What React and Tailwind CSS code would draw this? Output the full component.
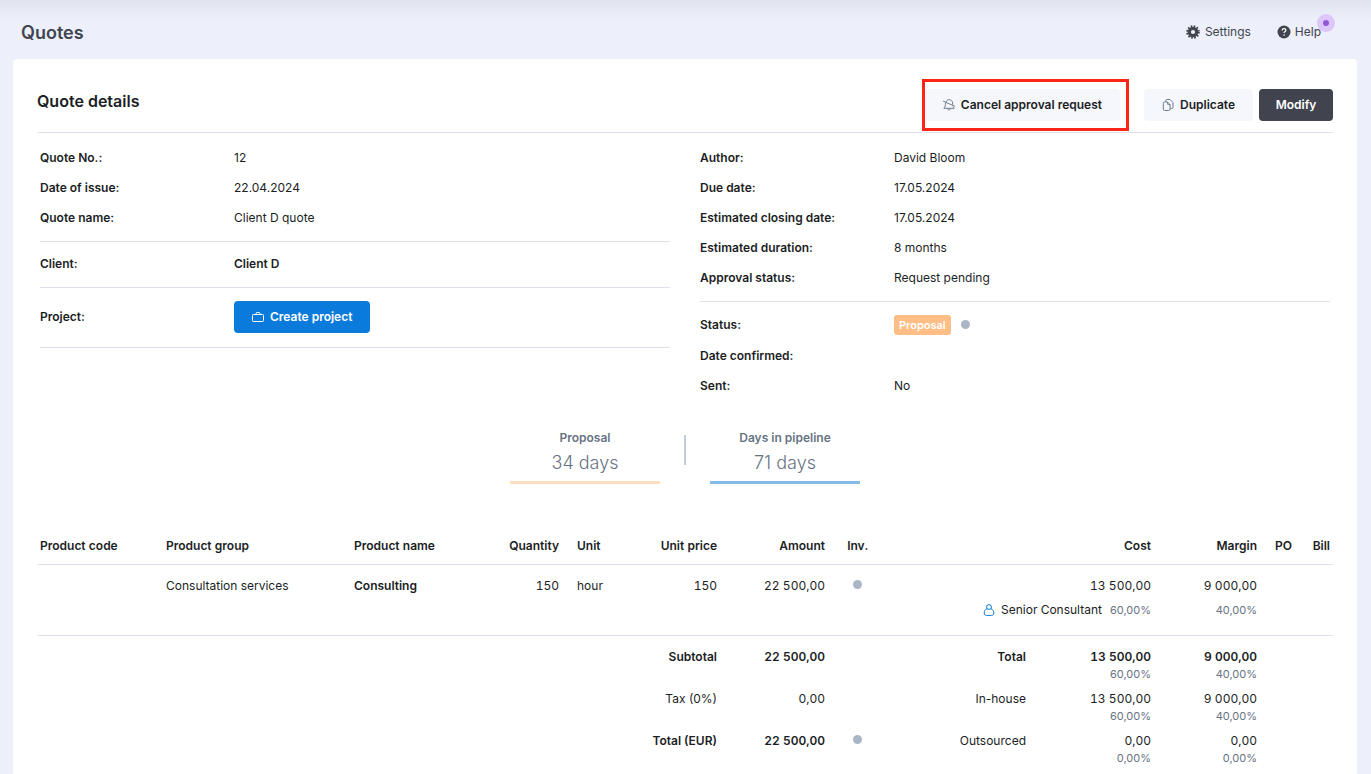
import clsx from 'clsx';

const details = [
    { label: 'Quote No.:', value: '12' },
    { label: 'Date of issue:', value: '22.04.2024' },
    { label: 'Quote name:', value: 'Client D quote' },
];

const dates = [
    { label: 'Author:', value: 'David Bloom' },
    { label: 'Due date:', value: '17.05.2024' },
    { label: 'Estimated closing date:', value: '17.05.2024' },
    { label: 'Estimated duration:', value: '8 months' },
    { label: 'Approval status:', value: 'Request pending' },
];

const totals = [
    { label: 'Subtotal', amount: '22 500,00', bold: true, side: 'Total', sideBold: true, cost: '13 500,00', costPct: '60,00%', margin: '9 000,00', marginPct: '40,00%' },
    { label: 'Tax (0%)', amount: '0,00', side: 'In-house', cost: '13 500,00', costPct: '60,00%', margin: '9 000,00', marginPct: '40,00%' },
    { label: 'Total (EUR)', amount: '22 500,00', bold: true, dot: true, side: 'Outsourced', cost: '0,00', costPct: '0,00%', margin: '0,00', marginPct: '0,00%' },
];

function GearIcon() {
    return (
        <svg className="size-[14px]" viewBox="0 0 14 14" aria-hidden="true">
            <circle cx="7" cy="7" r="3.7" fill="none" stroke="currentColor" strokeWidth="3.2" />
            <circle cx="7" cy="7" r="5.8" fill="none" stroke="currentColor" strokeWidth="2" strokeDasharray="1.6 1.437" />
        </svg>
    );
}

function HelpIcon() {
    return (
        <svg className="size-[14px]" viewBox="0 0 14 14" aria-hidden="true">
            <circle cx="7" cy="7" r="6.5" fill="currentColor" />
            <path d="M5.1 5.5c.1-1.2.8-1.800 1.900-1.800s1.900.7 1.900 1.600c0 1.300-1.800 1.300-1.800 2.800" fill="none" stroke="#fff" strokeWidth="1.2" />
            <circle cx="7.100" cy="10" r=".8" fill="#fff" />
        </svg>
    );
}

function BellOffIcon() {
    return (
        <svg className="size-3 text-[#6f7b8d]" viewBox="0 0 12 12" fill="none" stroke="currentColor" strokeLinecap="round" strokeLinejoin="round" aria-hidden="true">
            <path d="M.4 2.200l11.200 5" />
            <path d="M3.100 2.500C3.700 1.300 4.800.7 6.100.7c2.100 0 3.400 1.400 3.500 3.200l.1 1.500" />
            <path d="M2.500 4.300C2.500 6.600 2.100 8.100.8 9.300h10.400L10.300 8" />
            <path d="M5 10.600c.3.800 1.800.8 2.100 0" />
        </svg>
    );
}

function CopyIcon() {
    return (
        <svg className="size-3 text-[#6f7b8d]" viewBox="0 0 12 12" fill="none" stroke="currentColor" strokeLinejoin="round" aria-hidden="true">
            <path d="M3.500 2.900H2.500C1.700 2.900 1.300 3.400 1.300 4.200v5.900c0 .9.500 1.400 1.400 1.400h4c.9 0 1.400-.6 1.400-1.400" />
            <path d="M3.700 2.900V1.900C3.700 1 4.200.5 5.100.5H8l3 3v4.700c0 .9-.5 1.400-1.400 1.400H8.200" />
            <path d="M3.700 2.900h1.700l2.700 2.700v4.500" />
            <path d="M5.500 3v1.800c0 .5.3.8.8.8h1.800" />
        </svg>
    );
}

function BriefcaseIcon() {
    return (
        <svg className="size-3" viewBox="0 0 12 12" fill="none" stroke="currentColor" aria-hidden="true">
            <rect x=".5" y="3.500" width="11" height="7" rx=".8" />
            <path d="M4 3.500v-.8c0-.7.4-1.200 1.100-1.200h1.800c.7 0 1.100.5 1.100 1.200v.8" />
        </svg>
    );
}

function PersonIcon() {
    return (
        <svg className="size-3 text-[#0a7bdb]" viewBox="0 0 12 12" fill="none" stroke="currentColor" strokeLinejoin="round" aria-hidden="true">
            <circle cx="6" cy="3" r="2.400" />
            <path d="M4.200 4.600C2.300 5.300 1.200 7 1.200 9c0 1.600.9 2.400 2.300 2.400h5c1.400 0 2.300-.8 2.300-2.400 0-2-1.100-3.700-3-4.400" />
        </svg>
    );
}

function Dot() {
    return <span className="mb-px inline-block size-[9px] rounded-full bg-[#abb5c6]" />;
}

function Field({ label, children, tall }) {
    return (
        <div className={clsx('flex items-center', tall ? 'h-8' : 'h-[30px]')}>
            <dt className="w-[194px] shrink-0 font-semibold">{label}</dt>
            <dd className="flex items-center">{children}</dd>
        </div>
    );
}

function Stat({ label, value, line }) {
    return (
        <div className={clsx('w-[150px] border-b-[3px] pb-[5px] text-center text-[#687384]', line)}>
            <p className="text-xs font-semibold">{label}</p>
            <p className="pt-1 text-lg font-light leading-[26px]">{value}</p>
        </div>
    );
}

function Percent({ children }) {
    return <div className="text-[11px] font-normal normal-nums leading-[18px] text-[#687384]">{children}</div>;
}

export default function App() {
    return (
        <div className="min-h-screen bg-[#edf0fa] bg-linear-to-b from-[#e0e4ee] to-[#edf0fa] to-[20px] font-['Inter',sans-serif] text-xs text-[#1b1e24]">
            <header className="flex h-[59px] items-center justify-between pl-[21px] pr-[50px] pt-[6px] text-[#41454f]">
                <h1 className="text-lg font-semibold">Quotes</h1>
                <nav className="flex items-center gap-[26px] pb-[2px]">
                    <a href="#settings" className="flex items-center gap-[5px]">
                        <GearIcon />
                        Settings
                    </a>
                    <a href="#help" className="relative flex items-center gap-1">
                        <HelpIcon />
                        Help
                        {/* Unread news indicator */}
                        <span className="absolute -right-[14px] -top-[10px] flex size-[18px] items-center justify-center rounded-full bg-[#dcc6fa]">
                            <span className="size-[6px] rounded-full bg-[#8f59d6]" />
                        </span>
                    </a>
                </nav>
            </header>

            <main className="ml-[13px] mr-[14px] min-h-[calc(100vh-59px)] rounded-t bg-white px-6">
                <div className="flex h-[74px] items-start justify-between border-b border-[#dce1ea] pt-[30px]">
                    <h2 className="text-base font-semibold">Quote details</h2>
                    <div className="flex font-semibold">
                        <div className="relative mr-6">
                            <button type="button" className="flex h-8 items-center gap-[6px] rounded bg-[#f6f7fc] px-[18px]">
                                <BellOffIcon />
                                Cancel approval request
                            </button>
                            {/* Highlight frame */}
                            <span className="pointer-events-none absolute -bottom-[10px] -left-[3px] -right-[9px] -top-[10px] border-[3px] border-[#fb2618]" />
                        </div>
                        <button type="button" className="mr-[6px] flex h-8 items-center gap-[6px] rounded bg-[#f6f7fc] px-[18px]">
                            <CopyIcon />
                            Duplicate
                        </button>
                        <button type="button" className="h-8 min-w-[74px] rounded bg-[#41444e] px-4 text-white">
                            Modify
                        </button>
                    </div>
                </div>

                <div className="grid grid-cols-2 gap-[30px] px-[3px] pt-[10px]">
                    <div>
                        <dl className="border-b border-[#dfe1ea] pb-2">
                            {details.map((item) => (
                                <Field key={item.label} label={item.label}>{item.value}</Field>
                            ))}
                        </dl>
                        <dl className="border-b border-[#dfe1ea] pb-2 pt-[7px]">
                            <Field label="Client:">
                                <a href="#client" className="font-semibold">Client D</a>
                            </Field>
                        </dl>
                        <dl className="border-b border-[#dfe1ea] pb-[14px] pt-[13px]">
                            <Field label="Project:" tall>
                                <button type="button" className="flex h-8 items-center gap-[6px] rounded bg-[#0a7bdb] px-[18px] font-semibold text-white">
                                    <BriefcaseIcon />
                                    Create project
                                </button>
                            </Field>
                        </dl>
                    </div>
                    <div>
                        <dl className="border-b border-[#dfe1ea] pb-2">
                            {dates.map((item) => (
                                <Field key={item.label} label={item.label}>{item.value}</Field>
                            ))}
                        </dl>
                        <dl className="pt-[7px]">
                            <Field label="Status:" tall>
                                <span className="mr-[10px] rounded-[3px] bg-[#ffbe85] px-[5px] text-[11px] font-semibold leading-5 text-white">Proposal</span>
                                <Dot />
                            </Field>
                            <Field label="Date confirmed:" />
                            <Field label="Sent:">No</Field>
                        </dl>
                    </div>
                </div>

                <div className="flex items-start justify-center gap-6 pt-[29px]">
                    <Stat label="Proposal" value="34 days" line="border-[#fddfbe]" />
                    <span className="mt-[5px] h-[30px] w-[2px] bg-[#c3ccdb]" />
                    <Stat label="Days in pipeline" value="71 days" line="border-[#84bbe8]" />
                </div>

                <table className="mt-[43px] w-full min-w-[1200px] table-fixed tabular-nums">
                    <colgroup>
                        <col className="w-[120px]" />
                        <col className="w-[188px]" />
                        <col className="w-[140px]" />
                        <col className="w-[83px]" />
                        <col className="w-[70px]" />
                        <col className="w-[88px]" />
                        <col className="w-[108px]" />
                        <col className="w-[47px]" />
                        <col />
                        <col className="w-[125px]" />
                        <col className="w-[106px]" />
                        <col className="w-[36px]" />
                        <col className="w-[31px]" />
                    </colgroup>
                    <thead>
                        <tr className="h-[37px] whitespace-nowrap border-b border-[#dce1ea] text-left *:pt-[2px] *:font-semibold">
                            <th className="pl-[3px]">Product code</th>
                            <th className="pl-[9px]">Product group</th>
                            <th className="pl-[9px]">Product name</th>
                            <th className="pr-[9px] text-right">Quantity</th>
                            <th className="pl-[9px]">Unit</th>
                            <th className="pr-[9px] text-right">Unit price</th>
                            <th className="pr-[9px] text-right">Amount</th>
                            <th className="text-center">Inv.</th>
                            <th colSpan={2} className="pr-[9px] text-right">Cost</th>
                            <th className="pr-[9px] text-right">Margin</th>
                            <th className="pl-[9px]">PO</th>
                            <th className="pr-[3px] text-right">Bill</th>
                        </tr>
                    </thead>
                    <tbody>
                        <tr className="h-[71px] border-b border-[#dce1ea] align-top *:pt-[13px]">
                            <td />
                            <td className="pl-[9px]">Consultation services</td>
                            <td className="pl-[9px] font-semibold">Consulting</td>
                            <td className="pr-[9px] text-right">150</td>
                            <td className="pl-[9px]">hour</td>
                            <td className="pr-[9px] text-right">150</td>
                            <td className="pr-[9px] text-right">22 500,00</td>
                            <td className="text-center"><Dot /></td>
                            <td colSpan={2} className="pr-[9px] text-right">
                                13 500,00
                                <div className="flex items-center justify-end pt-[7px]">
                                    <PersonIcon />
                                    <span className="ml-[6px] mr-2">Senior Consultant</span>
                                    <Percent>60,00%</Percent>
                                </div>
                            </td>
                            <td className="pr-[9px] text-right">
                                9 000,00
                                <div className="pt-[7px]">
                                    <Percent>40,00%</Percent>
                                </div>
                            </td>
                            <td />
                            <td />
                        </tr>
                    </tbody>
                    <tfoot className="before:block before:h-[13px]">
                        {totals.map((row) => (
                            <tr key={row.label} className="text-right align-top *:pb-[8px]">
                                <td colSpan={6} className={clsx('pr-[9px] normal-nums', row.bold && 'font-semibold')}>{row.label}</td>
                                <td className={clsx('pr-[9px]', row.bold && 'font-semibold')}>{row.amount}</td>
                                <td className="text-center">{row.dot && <Dot />}</td>
                                <td className={clsx('pr-[9px] normal-nums', row.sideBold && 'font-semibold')}>{row.side}</td>
                                <td className={clsx('pr-[9px]', row.sideBold && 'font-semibold')}>
                                    {row.cost}
                                    <Percent>{row.costPct}</Percent>
                                </td>
                                <td className={clsx('pr-[9px]', row.sideBold && 'font-semibold')}>
                                    {row.margin}
                                    <Percent>{row.marginPct}</Percent>
                                </td>
                                <td colSpan={2} />
                            </tr>
                        ))}
                    </tfoot>
                </table>
            </main>
        </div>
    );
}
